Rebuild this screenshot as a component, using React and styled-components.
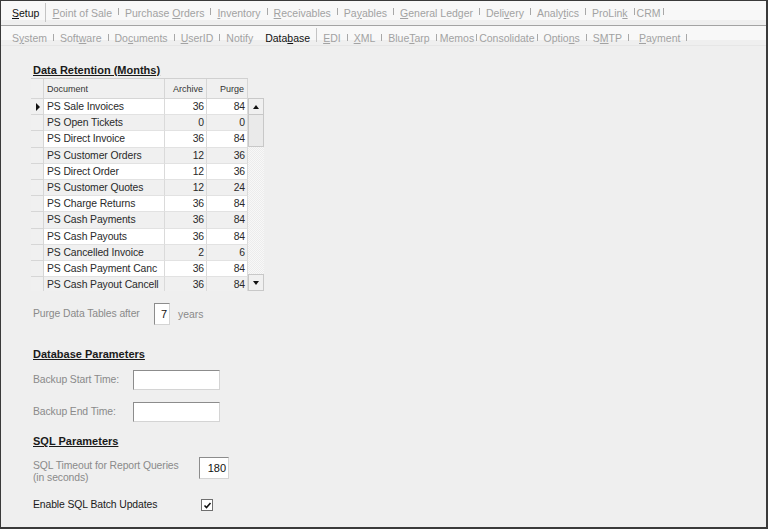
import React from "react";
import styled, { createGlobalStyle, css } from "styled-components";

const GlobalStyle = createGlobalStyle`
  html, body {
    margin: 0;
    padding: 0;
    background: #efefef;
  }
  body {
    font-family: "Liberation Sans", Arial, sans-serif;
    font-size: 10.5px;
    color: #222;
  }
`;

const mainTabs = [
  "&Setup",
  "&Point of Sale",
  "Purchase &Orders",
  "&Inventory",
  "&Receivables",
  "Pa&yables",
  "&General Ledger",
  "Deli&very",
  "Analy&tics",
  "ProLin&k",
  { t: "CRM", pl: 2, pr: 2 },
];

const subTabs = [
  "S&ystem",
  "Soft&ware",
  "Do&cuments",
  "&UserID",
  "Notify",
  { t: "Data&base", pl: 6 },
  "&EDI",
  "&XML",
  "Blue&Tarp",
  { t: "Memos", pl: 3, pr: 2 },
  { t: "Consolidate", pl: 2, pr: 2 },
  "Optio&ns",
  "S&MTP",
  { t: "&Payment", pl: 10 },
];

const rows = [
  ["PS Sale Invoices", 36, 84],
  ["PS Open Tickets", 0, 0],
  ["PS Direct Invoice", 36, 84],
  ["PS Customer Orders", 12, 36],
  ["PS Direct Order", 12, 36],
  ["PS Customer Quotes", 12, 24],
  ["PS Charge Returns", 36, 84],
  ["PS Cash Payments", 36, 84],
  ["PS Cash Payouts", 36, 84],
  ["PS Cancelled Invoice", 2, 6],
  ["PS Cash Payment Canc", 36, 84],
  ["PS Cash Payout Cancell", 36, 84],
];

// renders "Pa&yables" with the access key underlined
const Label = ({ text }) => {
  const i = text.indexOf("&");
  if (i < 0) return text;
  return (
    <>
      {text.slice(0, i)}
      <u>{text[i + 1]}</u>
      {text.slice(i + 2)}
    </>
  );
};

const norm = (tab) => (typeof tab === "string" ? { t: tab } : tab);

const TabStrip = ({ tabs, selected, height, line, bottom }) => {
  const list = tabs.map(norm);
  return (
    <TabRow $h={height} $line={line} $bottom={bottom}>
      {list.map((tab, i) => {
        const active = tab.t.replace("&", "") === selected;
        const nextActive =
          list[i + 1] && list[i + 1].t.replace("&", "") === selected;
        return (
          <React.Fragment key={tab.t}>
            <Tab $active={active} $pl={tab.pl} $pr={tab.pr}>
              <Label text={tab.t} />
            </Tab>
            {!nextActive && <Sep $tall={active} />}
          </React.Fragment>
        );
      })}
    </TabRow>
  );
};

const App = () => (
  <>
    <GlobalStyle />
    <Window>
      <TabStrip tabs={mainTabs} selected="Setup" height={24} line="#a3a3a3" />
      <TabStrip
        tabs={subTabs}
        selected="Database"
        height={19}
        line="#e6e6e6"
        bottom
      />

      <Content>
        <Heading>Data Retention (Months)</Heading>
        <Grid>
          <Table>
            <HeaderRow>
              <RowHead />
              <HeadCell>Document</HeadCell>
              <HeadCell $num>Archive</HeadCell>
              <HeadCell $num>Purge</HeadCell>
            </HeaderRow>
            <Body>
              {rows.map(([doc, archive, purge], i) => (
                <Row key={doc} $alt={i % 2 === 1}>
                  <RowHead>{i === 0 && <Pointer />}</RowHead>
                  <Cell>{doc}</Cell>
                  <Cell $num>{archive}</Cell>
                  <Cell $num>{purge}</Cell>
                </Row>
              ))}
            </Body>
          </Table>
          <ScrollBar>
            <ScrollButton>
              <Arrow />
            </ScrollButton>
            <Thumb />
            <Track />
            <ScrollButton>
              <Arrow $down />
            </ScrollButton>
          </ScrollBar>
        </Grid>

        <PurgeRow>
          <FieldLabel $w={121}>Purge Data Tables after</FieldLabel>
          <Box $w={16} $h={22}>7</Box>
          <Years>years</Years>
        </PurgeRow>

        <Heading $top={23}>Database Parameters</Heading>
        <FieldRow $top={9}>
          <FieldLabel $w={100}>Backup Start Time:</FieldLabel>
          <Box $w={87} $h={20} />
        </FieldRow>
        <FieldRow $top={12}>
          <FieldLabel $w={100}>Backup End Time:</FieldLabel>
          <Box $w={87} $h={20} />
        </FieldRow>

        <Heading $top={13}>SQL Parameters</Heading>
        <FieldRow $top={9} $start>
          <FieldLabel $w={166} $offset={3}>
            SQL Timeout for Report Queries
            <br />
            (in seconds)
          </FieldLabel>
          <Box $w={30} $h={22}>180</Box>
        </FieldRow>
        <FieldRow $top={15}>
          <FieldLabel $w={168} $dark>
            Enable SQL Batch Updates
          </FieldLabel>
          <CheckBox>
            <svg width="9" height="9" viewBox="0 0 9 9">
              <path
                d="M1.5 4.5 L3.5 6.5 L7.5 2"
                fill="none"
                stroke="#111"
                strokeWidth="1.6"
              />
            </svg>
          </CheckBox>
        </FieldRow>
      </Content>
    </Window>
  </>
);

export default App;

const Window = styled.div`
  width: 768px;
  height: 529px;
  box-sizing: border-box;
  border: 1px solid #3a3a3a;
  border-right-width: 2px;
  border-bottom-width: 2px;
  background: #efefef;
  display: flex;
  flex-direction: column;
  overflow: hidden;
`;

const TabRow = styled.div`
  display: flex;
  align-items: ${(p) => (p.$bottom ? "flex-end" : "center")};
  height: ${(p) => p.$h}px;
  padding-left: 5px;
  background: linear-gradient(
    #f8f8f8 0,
    #f8f8f8 ${(p) => p.$h - 5}px,
    #efefef ${(p) => p.$h - 5}px
  );
  border-bottom: 1px solid ${(p) => p.$line};
  flex-shrink: 0;
`;

const Tab = styled.span`
  padding: 0 ${(p) => p.$pr ?? 6}px 0 ${(p) => p.$pl ?? 6}px;
  line-height: 13px;
  white-space: nowrap;
  color: ${(p) => (p.$active ? "#111" : "#a2a2a2")};
  u {
    text-decoration-thickness: 1px;
    text-underline-offset: 1px;
  }
`;

const Sep = styled.span`
  width: 1px;
  flex-shrink: 0;
  align-self: ${(p) => (p.$tall ? "stretch" : "auto")};
  background: ${(p) => (p.$tall ? "#c4c4c4" : "#a8a8a8")};
  ${(p) =>
    p.$tall
      ? css`
          margin: 2px 0 3px;
        `
      : css`
          height: 7px;
          margin-bottom: 4px;
        `}
`;

const Content = styled.div`
  padding: 18px 0 0 32px;
  display: flex;
  flex-direction: column;
  align-items: flex-start;
`;

const Heading = styled.div`
  font-weight: bold;
  font-size: 11px;
  line-height: 13px;
  color: #1a1a1a;
  text-decoration: underline;
  text-underline-offset: 1px;
  margin-top: ${(p) => p.$top || 0}px;
`;

const Grid = styled.div`
  display: flex;
  margin: 1px 0 0 -2px;
`;

const Table = styled.div`
  display: flex;
  flex-direction: column;
  width: 217px;
`;

const cols = css`
  display: grid;
  grid-template-columns: 13px 121px 42px 41px;
`;

const HeaderRow = styled.div`
  ${cols};
  height: 21px;
  background: #f0f0f0;
  border-top: 1px solid #d0d0d0;
  box-sizing: border-box;
`;

const HeadCell = styled.div`
  font-size: 9px;
  color: #333;
  display: flex;
  align-items: center;
  justify-content: ${(p) => (p.$num ? "flex-end" : "flex-start")};
  padding: 0 3px;
  border-right: 1px solid #d6d6d6;
  border-bottom: 1px solid #d6d6d6;
`;

const Body = styled.div`
  height: 192px;
  overflow: hidden;
`;

const Row = styled.div`
  ${cols};
  height: 16.2px;
  background: ${(p) => (p.$alt ? "#f0f0f0" : "#ffffff")};
`;

const RowHead = styled.div`
  background: #f0f0f0;
  border-right: 1px solid #d6d6d6;
  border-bottom: 1px solid #d6d6d6;
  display: flex;
  align-items: center;
  justify-content: center;
`;

const Pointer = styled.span`
  width: 0;
  height: 0;
  border-left: 4px solid #111;
  border-top: 4px solid transparent;
  border-bottom: 4px solid transparent;
  margin-left: 1px;
`;

const Cell = styled.div`
  font-size: 10.4px;
  letter-spacing: -0.1px;
  color: #2a2a2a;
  display: flex;
  align-items: center;
  justify-content: ${(p) => (p.$num ? "flex-end" : "flex-start")};
  padding: 0 2px 0 3px;
  white-space: nowrap;
  overflow: hidden;
  border-right: 1px solid #dadada;
  border-bottom: 1px solid #e2e2e2;
`;

const ScrollBar = styled.div`
  width: 16px;
  margin-top: 20px;
  height: 193px;
  display: flex;
  flex-direction: column;
`;

const ScrollButton = styled.div`
  height: 17px;
  box-sizing: border-box;
  background: #f0f0f0;
  border: 1px solid #c8c8c8;
  display: flex;
  align-items: center;
  justify-content: center;
`;

const Arrow = styled.span`
  width: 0;
  height: 0;
  border-left: 3.5px solid transparent;
  border-right: 3.5px solid transparent;
  ${(p) =>
    p.$down
      ? css`
          border-top: 4px solid #111;
        `
      : css`
          border-bottom: 4px solid #111;
        `}
`;

const Thumb = styled.div`
  height: 32px;
  box-sizing: border-box;
  background: #eaeaea;
  border: 1px solid #c8c8c8;
  border-top: none;
`;

const Track = styled.div`
  flex: 1;
  background-color: #f4f4f4;
  background-image: repeating-conic-gradient(#ececec 0 25%, #f8f8f8 0 50%);
  background-size: 2px 2px;
`;

const PurgeRow = styled.div`
  display: flex;
  align-items: center;
  margin-top: 12px;
`;

const FieldRow = styled.div`
  display: flex;
  align-items: ${(p) => (p.$start ? "flex-start" : "center")};
  margin-top: ${(p) => p.$top}px;
`;

const FieldLabel = styled.div`
  width: ${(p) => p.$w}px;
  margin-top: ${(p) => p.$offset || 0}px;
  font-size: 10.4px;
  letter-spacing: -0.1px;
  line-height: 12px;
  color: ${(p) => (p.$dark ? "#1a1a1a" : "#8a8a8a")};
  flex-shrink: 0;
`;

const Box = styled.div`
  width: ${(p) => p.$w}px;
  height: ${(p) => p.$h}px;
  box-sizing: border-box;
  background: #fff;
  border: 1px solid #8c8c8c;
  border-right-color: #d4d4d4;
  border-bottom-color: #d4d4d4;
  font-size: 11px;
  color: #111;
  display: flex;
  align-items: center;
  justify-content: flex-end;
  padding-right: 2px;
`;

const Years = styled.span`
  margin-left: 8px;
  font-size: 10.4px;
  color: #8a8a8a;
`;

const CheckBox = styled.div`
  width: 12px;
  height: 12px;
  box-sizing: border-box;
  background: #fff;
  border: 1px solid #6f6f6f;
  display: flex;
  align-items: center;
  justify-content: center;
`;
